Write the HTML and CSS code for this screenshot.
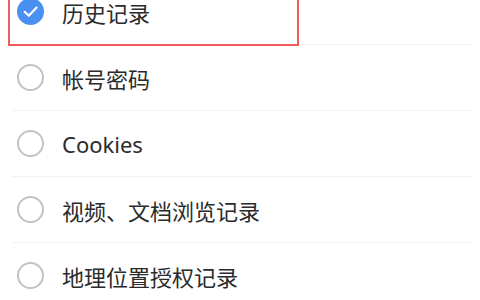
FILE: index.html
```html
<!DOCTYPE html>
<html lang="zh">
<head>
<meta charset="utf-8">
<link rel="stylesheet" href="styles.css">
</head>
<body>
<div class="page">
  <ul class="list">
    <li class="row">
      <span class="check on">
        <svg viewBox="0 0 27 27" width="27" height="27"><circle cx="13.5" cy="13.5" r="13.5" fill="#4a8ff2"/><path d="M7.6 13.8 L11.8 17.8 L19.6 9.6" fill="none" stroke="#fff" stroke-width="2.2" stroke-linecap="round" stroke-linejoin="round"/></svg>
      </span>
      <span class="label">历史记录</span>
    </li>
    <li class="row">
      <span class="check"></span>
      <span class="label">帐号密码</span>
    </li>
    <li class="row">
      <span class="check"></span>
      <span class="label latin">Cookies</span>
    </li>
    <li class="row">
      <span class="check"></span>
      <span class="label">视频、文档浏览记录</span>
    </li>
    <li class="row">
      <span class="check"></span>
      <span class="label">地理位置授权记录</span>
    </li>
  </ul>
  <div class="highlight"></div>
</div>
</body>
</html>
```

FILE: styles.css
```css
html, body {
  margin: 0;
  padding: 0;
  background: #ffffff;
  overflow: hidden;
}
.page {
  position: relative;
  width: 480px;
  height: 300px;
  overflow: hidden;
  font-family: "Noto Sans", "Noto Sans CJK SC", sans-serif;
  color: #2b2b2b;
}
.list {
  list-style: none;
  margin: -21px 8px 0 12px;
  padding: 0;
}
.row {
  display: flex;
  align-items: center;
  height: 65px;
  border-bottom: 1px solid #f2f2f2;
  padding-left: 5px;
}
.check {
  flex: none;
  width: 27px;
  height: 27px;
  box-sizing: border-box;
  border: 2px solid #c2c2c2;
  border-radius: 50%;
  margin-right: 18px;
}
.check.on {
  border: none;
}
.check svg {
  display: block;
}
.label {
  font-size: 22px;
  line-height: 1;
  position: relative;
  top: 1px;
}
.label.latin {
  top: 0;
}
.highlight {
  position: absolute;
  left: 8px;
  top: -10px;
  width: 291px;
  height: 56px;
  box-sizing: border-box;
  border: 2px solid #f25c5c;
}
```
